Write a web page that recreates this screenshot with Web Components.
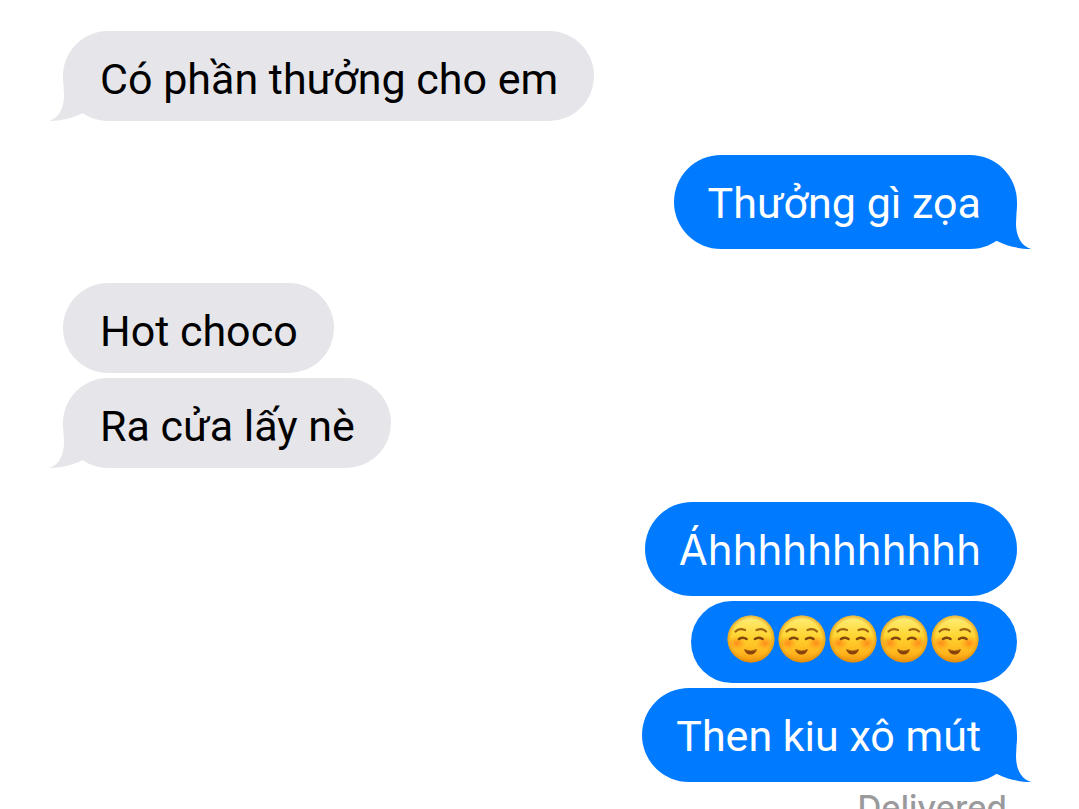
<!DOCTYPE html>
<html lang="vi">
<head>
<meta charset="utf-8">
<meta name="viewport" content="width=device-width, initial-scale=1">
<title>Messages</title>
<style>
  html { background: #fff; }
  body { margin: 0; height: 100vh; overflow: hidden; font-family: Roboto, Inter, "Noto Sans", sans-serif; }
</style>
</head>
<body>
<message-thread>
  <message-group side="in">
    <message-bubble side="in" tail>Có phần thưởng cho em</message-bubble>
  </message-group>
  <message-group side="out">
    <message-bubble side="out" tail>Thưởng gì zọa</message-bubble>
  </message-group>
  <message-group side="in">
    <message-bubble side="in">Hot choco</message-bubble>
    <message-bubble side="in" tail>Ra cửa lấy nè</message-bubble>
  </message-group>
  <message-group side="out">
    <message-bubble side="out" wide>Áhhhhhhhhhhh</message-bubble>
    <message-bubble side="out" emoji><smiling-face></smiling-face><smiling-face></smiling-face><smiling-face></smiling-face><smiling-face></smiling-face><smiling-face></smiling-face></message-bubble>
    <message-bubble side="out" tail>Then kiu xô mút</message-bubble>
    <delivery-status>Delivered</delivery-status>
  </message-group>
</message-thread>

<script>
  const define = (name, html) => customElements.define(name, class extends HTMLElement {
    constructor() {
      super();
      const template = document.createElement('template');
      template.innerHTML = html;
      this.attachShadow({ mode: 'open' }).append(template.content.cloneNode(true));
    }
  });

  define('message-thread', `
    <style>
      :host { display: flex; flex-direction: column; gap: 34px; padding: 31px 62px 0 63px; }
    </style>
    <slot></slot>`);

  define('message-group', `
    <style>
      :host { display: flex; flex-direction: column; align-items: flex-start; gap: 5px; }
      :host([side="out"]) { align-items: flex-end; }
    </style>
    <slot></slot>`);

  define('message-bubble', `
    <style>
      :host {
        display: block; position: relative; box-sizing: border-box;
        padding: 20px 36px 14px 37px; border-radius: 47px;
        font-size: 43px; line-height: 56px; white-space: nowrap;
        background: #e5e5ea; color: #000; --fill: #e5e5ea;
      }
      :host([side="out"]) { padding: 20px 36px 18px 34px; background: #007aff; color: #fff; --fill: #007aff; }
      :host([wide]) { font-family: Inter, sans-serif; font-size: 42px; }
      :host([emoji]) { padding: 14px 38px 20px 36px; }
      .text { display: flex; }
      :host([emoji]) .text { gap: 3px; line-height: 48px; }
      svg { display: none; position: absolute; left: -14px; bottom: 0; fill: var(--fill); }
      :host([tail]) svg { display: block; }
      :host([side="out"]) svg { left: auto; right: -14px; transform: scaleX(-1); }
    </style>
    <svg width="60" height="46" viewBox="0 0 60 46" aria-hidden="true">
      <path d="M14 0 L15 20 C15 33 10 43 0 46 C12 46 24 43 34 38 L50 30 V0 Z"/>
    </svg>
    <div class="text"><slot></slot></div>`);

  define('smiling-face', `
    <style>
      :host { display: block; width: 48px; height: 48px; }
      svg { display: block; }
    </style>
    <svg width="48" height="48" viewBox="0 0 48 48" role="img" aria-label="☺️">
      <defs>
        <linearGradient id="skin" x1="0" y1="0" x2="0" y2="1">
          <stop offset="0" stop-color="#fff07c"/>
          <stop offset=".45" stop-color="#ffd430"/>
          <stop offset=".8" stop-color="#ffb51d"/>
          <stop offset="1" stop-color="#f0920c"/>
        </linearGradient>
        <radialGradient id="rim">
          <stop offset=".82" stop-color="#e79a10" stop-opacity="0"/>
          <stop offset="1" stop-color="#d98408" stop-opacity=".65"/>
        </radialGradient>
        <radialGradient id="blush">
          <stop offset="0" stop-color="#ff6a10" stop-opacity=".65"/>
          <stop offset="1" stop-color="#ff8010" stop-opacity="0"/>
        </radialGradient>
      </defs>
      <circle cx="24" cy="24" r="23.5" fill="url(#skin)"/>
      <circle cx="24" cy="24" r="23.5" fill="url(#rim)"/>
      <ellipse cx="10" cy="28" rx="9" ry="7" fill="url(#blush)"/>
      <ellipse cx="38" cy="28" rx="9" ry="7" fill="url(#blush)"/>
      <g fill="none" stroke-linecap="round" stroke-linejoin="round">
        <path d="M8.500 16.500 Q12 12.500 18 15 M29.500 15 Q35.500 12.500 39 16.500" stroke="#a0640f" stroke-width="2.200"/>
        <path d="M12 24 Q16 21.500 19.500 24 M28 24 Q31.500 21.500 35.500 24" stroke="#80460c" stroke-width="2.600"/>
      </g>
      <path d="M17.500 34.500 Q23.500 37.500 29.500 34.500 C28.500 38 26.500 39.200 23.500 39.200 C20.500 39.200 18.500 38 17.500 34.500 Z" fill="#87420d" stroke="#87420d" stroke-width=".6" stroke-linejoin="round"/>
    </svg>`);

  define('delivery-status', `
    <style>
      :host { display: block; padding: 0 10px; font-family: Inter, sans-serif; font-size: 33px; line-height: 40px; font-weight: 500; color: #9a9a9c; }
    </style>
    <slot></slot>`);
</script>
</body>
</html>
